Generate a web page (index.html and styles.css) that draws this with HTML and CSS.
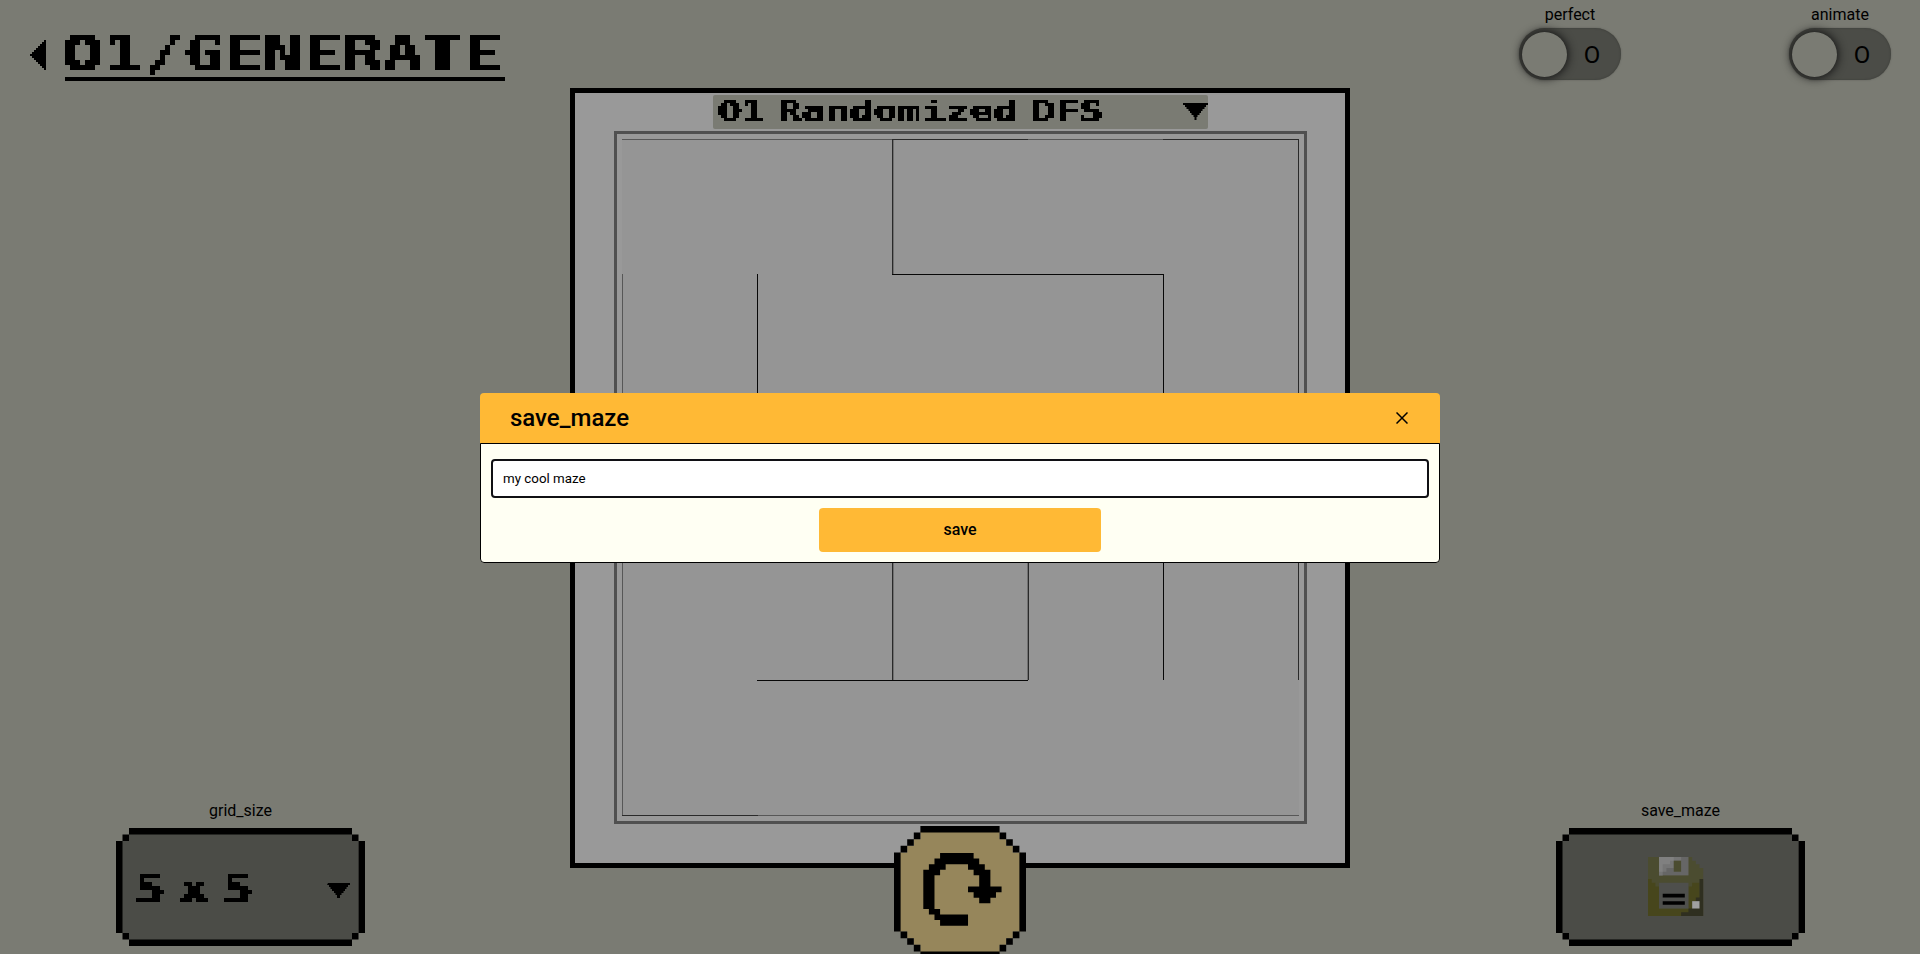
FILE: index.html
```html
<!DOCTYPE html>
<html lang="en">
<head>
<meta charset="utf-8">
<title>01/GENERATE</title>
<link rel="stylesheet" href="styles.css">
</head>
<body>
<div class="app">
  <section class="side left">
    <header class="heading">
      <svg class="back" width="16" height="30" viewBox="0 0 16 30" shape-rendering="crispEdges"><path d="M14 0h2v30h-2v-2h-2v-2h-2v-2h-2v-2h-2v-2h-2v-2h-2v-2h-2v-2h2v-2h2v-2h2v-2h2v-2h2v-2h2v-2h2z"/></svg>
      <h1 class="title"><svg class="title-art" width="460" height="60" viewBox="-10 -8 460 60">
        <defs>
          <!-- Samples the lettering once per 5px cell and fills the cell with the sample -->
          <filter id="cell5" filterUnits="userSpaceOnUse" primitiveUnits="userSpaceOnUse" x="0" y="0" width="440" height="45">
            <feOffset in="SourceAlpha" dx="1" dy="0" result="shift"/>
            <feMerge><feMergeNode in="SourceAlpha"/><feMergeNode in="shift"/></feMerge>
            <feComponentTransfer result="ink"><feFuncA type="discrete" tableValues="0 1"/></feComponentTransfer>
            <feFlood x="2" y="2" width="1" height="1" result="dot"/>
            <feOffset in="dot" x="0" y="0" width="5" height="5"/>
            <feTile result="dots"/>
            <feComposite in="ink" in2="dots" operator="in"/>
            <feMorphology operator="dilate" radius="2"/>
          </filter>
        </defs>
        <g filter="url(#cell5)"><text class="pixel" x="-3" y="40" font-size="48" textLength="440" lengthAdjust="spacingAndGlyphs"><tspan class="zero">0</tspan>1/GENERATE</text></g></svg></h1>
    </header>
    <div class="tool">
      <span class="label">grid_size</span>
      <div class="frame">
        <svg width="249" height="118" viewBox="0 0 249 118">
          <defs>
            <filter id="cell4" filterUnits="userSpaceOnUse" primitiveUnits="userSpaceOnUse" x="20" y="42" width="132" height="36">
              <feOffset in="SourceAlpha" dx="1" dy="0" result="shift"/>
              <feMerge><feMergeNode in="SourceAlpha"/><feMergeNode in="shift"/></feMerge>
              <feComponentTransfer result="ink"><feFuncA type="discrete" tableValues="0 1"/></feComponentTransfer>
              <feFlood x="21" y="47" width="1" height="1" result="dot"/>
              <feOffset in="dot" x="20" y="46" width="4" height="4"/>
              <feTile result="dots"/>
              <feComposite in="ink" in2="dots" operator="in"/>
              <feMorphology operator="dilate" radius="1" result="b"/>
              <feOffset in="b" dx="1" dy="0" result="b1"/>
              <feOffset in="b" dx="0" dy="1" result="b2"/>
              <feOffset in="b" dx="1" dy="1" result="b3"/>
              <feMerge><feMergeNode in="b"/><feMergeNode in="b1"/><feMergeNode in="b2"/><feMergeNode in="b3"/></feMerge>
            </filter>
          </defs>
          <path class="face" d="M13 6H236V13H242.500V105H236V112H13V105H6V13H13z"/>
          <path d="M13 0H236V6.500H13zM13 111.500H236V118H13zM0 13H6.500V105H0zM242.500 13H249V105H242.500zM6.500 6.500H13V13H6.500zM236 6.500H242.500V13H236zM6.500 105H13V111.500H6.500zM236 105H242.500V111.500H236z"/>
          <g class="pixel" font-size="38.400" filter="url(#cell4)">
            <text x="16.500" y="74" textLength="32" lengthAdjust="spacingAndGlyphs">5</text>
            <text x="61" y="74" textLength="32" lengthAdjust="spacingAndGlyphs">x</text>
            <text x="104.500" y="74" textLength="32" lengthAdjust="spacingAndGlyphs">5</text>
          </g>
          <path transform="translate(212 55)" d="M0 0h22v2h-2v2h-1.500v2h-1.500v2h-1.500v2h-2v2h-1.500v3h-3v-3h-1.500v-2h-1.500v-2h-2v-2h-1.500v-2h-1.500v-2h-2z"/>
        </svg>
      </div>
    </div>
  </section>

  <main class="center">
    <div class="board">
      <div class="select">
        <svg width="495" height="34">
          <defs>
            <filter id="cell3" filterUnits="userSpaceOnUse" primitiveUnits="userSpaceOnUse" x="5" y="5" width="420" height="27">
              <feOffset in="SourceAlpha" dx="1" dy="0" result="shift"/>
              <feMerge><feMergeNode in="SourceAlpha"/><feMergeNode in="shift"/></feMerge>
              <feComponentTransfer result="ink"><feFuncA type="discrete" tableValues="0 1"/></feComponentTransfer>
              <feFlood x="6" y="6" width="1" height="1" result="dot"/>
              <feOffset in="dot" x="5" y="5" width="3" height="3"/>
              <feTile result="dots"/>
              <feComposite in="ink" in2="dots" operator="in"/>
              <feMorphology operator="dilate" radius="1"/>
            </filter>
          </defs>
          <g class="pixel" font-size="28.800" filter="url(#cell3)">
            <text x="4" y="26" textLength="48" lengthAdjust="spacingAndGlyphs"><tspan class="zero">0</tspan>1</text>
            <text x="64" y="26" textLength="240" lengthAdjust="spacingAndGlyphs">Randomized</text>
            <text x="318" y="26" textLength="72" lengthAdjust="spacingAndGlyphs">DFS</text>
          </g>
          <path transform="translate(470 8)" d="M0 0h25v2h-2v2h-1.500v2h-2v2h-1.500v2h-1.500v2h-2v2h-1v3h-2v-3h-1v-2h-2v-2h-1.500v-2h-1.500v-2h-2v-2h-1.500v-2h-2z"/>
        </svg>
      </div>
      <div class="canvas">
        <svg width="677" height="677" viewBox="0 0 677 677" shape-rendering="crispEdges">
          <rect width="677" height="677" fill="#959595"/>
          <g fill="#575757">
            <rect width="270" height="1"/><rect x="406" width="135" height="1"/>
            <rect y="135" width="1" height="541"/>
            <rect x="135" y="676" width="542" height="1"/>
          </g>
          <g fill="#2a2a2a">
            <rect x="270" width="136" height="1"/><rect x="541" width="136" height="1"/>
            <rect x="676" width="1" height="541"/><rect y="676" width="136" height="1"/>
            <rect x="270" width="1" height="135"/><rect x="270" y="406" width="1" height="135"/>
            <rect x="406" y="406" width="1" height="135"/>
          </g>
          <g fill="#707070">
            <rect x="271" y="1" width="1" height="134"/><rect x="271" y="406" width="1" height="135"/>
            <rect x="405" y="406" width="1" height="135"/>
          </g>
          <g fill="#080808">
            <rect x="270" y="135" width="271" height="1"/>
            <rect x="541" y="135" width="1" height="406"/>
            <rect x="135" y="135" width="1" height="271"/>
            <rect x="135" y="541" width="271" height="1"/>
          </g>
        </svg>
      </div>
    </div>
    <svg class="regen" width="132" height="132" viewBox="0 0 20 20">
      <path fill="#96865b" d="M4 .8H16V2H17V3H18V4H19.200V16H18V17H17V18H16V19.200H4V18H3V17H2V16H.8V4H2V3H3V2H4z"/>
      <path d="M4 0H16V1H4zM4 19H16V20H4zM0 4H1V16H0zM19 4H20V16H19zM3 1h1v1h-1zM2 2h1v1h-1zM1 3h1v1h-1zM16 1h1v1h-1zM17 2h1v1h-1zM18 3h1v1h-1zM1 16h1v1h-1zM2 17h1v1h-1zM3 18h1v1h-1zM18 16h1v1h-1zM17 17h1v1h-1zM16 18h1v1h-1z"/>
      <path transform="translate(4.440 4.090) scale(.847)" d="M3 0H9V1H10V2H11V3H12V6H14V7H13V8H12V9H10V8H9V7H8V6H10V4H9V3H8V2H4V3H3V4H2V10H3V11H8V13H3V12H2V11H1V10H0V3H1V2H2V1H3z"/>
    </svg>
  </main>

  <section class="side right">
    <div class="switches">
      <div class="switch"><span class="label">perfect</span><div class="track"><span class="knob"></span><span class="state">O</span></div></div>
      <div class="switch"><span class="label">animate</span><div class="track"><span class="knob"></span><span class="state">O</span></div></div>
    </div>
    <div class="tool">
      <span class="label">save_maze</span>
      <div class="frame">
        <svg width="249" height="118" viewBox="0 0 249 118">
          <path class="face" d="M13 6H236V13H242.500V105H236V112H13V105H6V13H13z"/>
          <path d="M13 0H236V6.500H13zM13 111.500H236V118H13zM0 13H6.500V105H0zM242.500 13H249V105H242.500zM6.500 6.500H13V13H6.500zM236 6.500H242.500V13H236zM6.500 105H13V111.500H6.500zM236 105H242.500V111.500H236z"/>
          <g transform="translate(92 29) scale(3.680)">
            <path fill="#4b4c30" d="M0 0H12V1H13V2H14V3H15V16H0z"/>
            <path fill="#47461c" d="M0 6H1V7H2V8H3V14H11V8H12V7H14V16H0z"/>
            <path fill="#2f2f20" d="M14 6H15V16H9V15H11V14H12V12H13V11H14z"/>
            <path fill="#666" d="M3 0H11V5H3z"/>
            <path fill="#757575" d="M3 0H9V1H7V3H5V4H4V5H3z"/>
            <path fill="#808080" d="M3 0H7V1H6V2H4V4H3z"/>
            <path fill="#4b4c30" d="M7 1H9V4H7z"/>
            <path fill="#4e4f4c" d="M3 7H11V14H3z"/>
            <path d="M4 10H10V11H4zM4 12H10V13H4z"/>
            <path fill="#a0a0a0" d="M12 12H14V14H12z"/>
          </g>
        </svg>
      </div>
    </div>
  </section>
</div>

<div class="modal">
  <div class="modal-head">
    <h2 class="modal-title">save_maze</h2>
    <svg width="12" height="12" viewBox="0 0 12 12"><path d="M.5 .5L11.500 11.500M11.500 .5L.5 11.500" stroke="#000" stroke-width="1.500"/></svg>
  </div>
  <div class="modal-body">
    <input class="name" type="text" value="my cool maze">
    <button class="save">save</button>
  </div>
</div>
</body>
</html>
```

FILE: styles.css
```css
* { box-sizing: border-box; }
body { margin: 0; background: #7a7b73; font-family: Roboto, sans-serif; color: #000; }
svg { display: block; }
.app { display: grid; grid-template-columns: 570px 780px 570px; height: 954px; overflow: hidden; }
.side { display: flex; flex-direction: column; justify-content: space-between; height: 946px; }
.heading { display: flex; align-items: flex-start; gap: 19px; padding: 30px 0 0 30px; }
.back { margin-top: 10px; }
.title { margin: 0; width: 440px; height: 51px; border-bottom: 4px solid #000; }
.title-art { margin: -8px 0 0 -10px; }
.pixel { font-family: "DejaVu Sans Mono", monospace; font-weight: bold; }
.zero { font-family: "DejaVu Sans Condensed", "DejaVu Sans", sans-serif; font-stretch: condensed; }
.label { font-size: 16px; line-height: 19px; }
.tool { display: flex; flex-direction: column; align-items: center; gap: 8px; width: 249px; }
.left .tool { margin-left: 116px; }
.right .tool { margin-left: 206px; }
.face { fill: #4b4c47; }

.center { display: flex; flex-direction: column; align-items: center; padding-top: 88px; }
.board { display: flex; flex-direction: column; align-items: center; gap: 2px; flex: none; width: 780px; height: 780px; padding-top: 2px; border: 5px solid #000; background: #999; }
.select { width: 495px; height: 34px; border-radius: 2px; background: #7a7b73; }
.canvas { width: 693px; height: 693px; padding: 5px; border: 3px solid #505050; }
.regen { flex: none; margin-top: -42px; }

.switches { display: flex; gap: 168px; padding: 5px 0 0 169px; }
.switch { display: flex; flex-direction: column; align-items: center; gap: 4px; width: 102px; }
.track { display: flex; align-items: center; width: 102px; height: 52px; padding: 3px; border-radius: 26px; background: #4b4c47; box-shadow: inset 0 0 2px #383935, 0 0 2px #5c5d57; }
.knob { width: 45px; height: 45px; border-radius: 50%; background: #7a7b73; box-shadow: 0 0 10px 1px #111; }
.state { width: 50px; padding-top: 2px; text-align: center; font-size: 24px; line-height: 28px; }

.modal { position: absolute; left: 480px; top: 393px; width: 960px; height: 170px; border-radius: 4px; overflow: hidden; }
.modal-head { display: flex; align-items: center; justify-content: space-between; height: 50px; padding: 0 32px 0 30px; background: #ffb935; }
.modal-title { margin: 0; font-size: 24px; font-weight: 500; }
.modal-body { display: flex; flex-direction: column; align-items: center; gap: 10px; height: 120px; padding: 15px 10px 10px; border: 1px solid #000; border-radius: 0 0 4px 4px; background: #fffff3; }
.name { width: 938px; height: 39px; padding: 0 10px; border: 2px solid #101014; border-radius: 4px; background: #fff; font: 13.33px Roboto, sans-serif; color: #000; }
.save { width: 282px; height: 44px; padding: 0 0 2px; border: 0; border-radius: 4px; background: #ffb935; font: 500 16px Roboto, sans-serif; color: #000; }
```
